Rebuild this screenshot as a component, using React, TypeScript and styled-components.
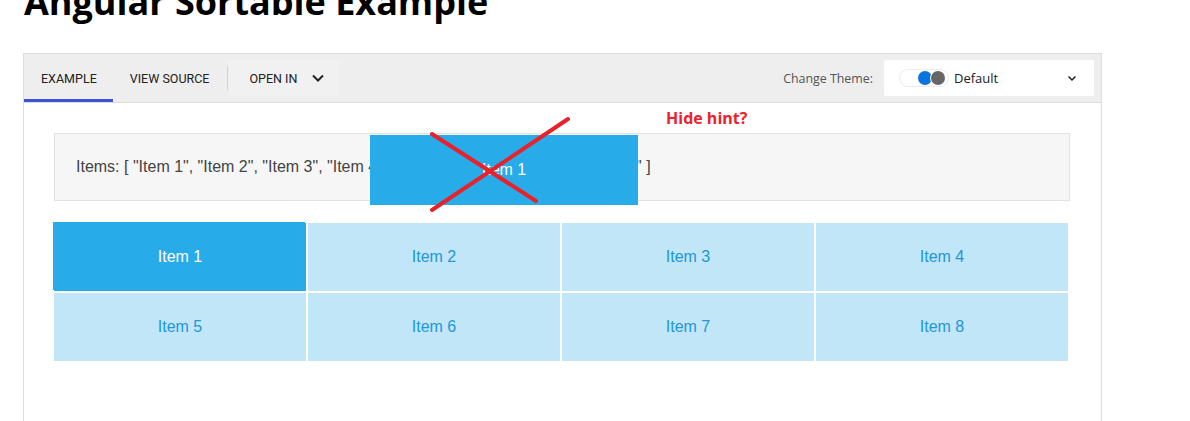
import React from 'react';
import styled, { createGlobalStyle } from 'styled-components';

const items = ['Item 1', 'Item 2', 'Item 3', 'Item 4', 'Item 5', 'Item 6', 'Item 7', 'Item 8'];

function App() {
  const [activeTab] = React.useState('example');

  return (
    <>
      <GlobalStyle />
      <Page>
        <Title>Angular Sortable Example</Title>

        <Frame>
          <Toolbar>
            <Tabs>
              <Tab $active={activeTab === 'example'}>EXAMPLE</Tab>
              <Tab $active={activeTab === 'source'}>VIEW SOURCE</Tab>
              <Separator />
              <OpenIn type="button">
                OPEN IN
                <svg width="12" height="8" viewBox="0 0 12 8">
                  <path d="M1 1.5 L6 6.5 L11 1.5" fill="none" stroke="#222" strokeWidth="2" />
                </svg>
              </OpenIn>
            </Tabs>

            <ThemePicker>
              <ThemeLabel>Change Theme:</ThemeLabel>
              <ThemeSelect>
                <ThemeSwatch>
                  <Dot $color="#0b74de" $left={18} />
                  <Dot $color="#666666" $left={31} />
                </ThemeSwatch>
                <ThemeName>Default</ThemeName>
                <svg width="10" height="7" viewBox="0 0 10 7">
                  <path d="M1.5 1.5 L5 5 L8.5 1.5" fill="none" stroke="#222" strokeWidth="1.5" />
                </svg>
              </ThemeSelect>
            </ThemePicker>
          </Toolbar>

          <Content>
            <ItemsBox>Items: [ {items.map((i) => `"${i}"`).join(', ')} ]</ItemsBox>

            <SortGrid>
              {items.map((item, index) => (
                <Cell key={item} $active={index === 0}>
                  {item}
                </Cell>
              ))}
            </SortGrid>

            <DragGhost>Item 1</DragGhost>
            <CrossMark width="160" height="110" viewBox="0 0 160 110">
              <path d="M8 21 L112 88 M144 6 L8 97" stroke="#e8212b" strokeWidth="4" strokeLinecap="round" />
            </CrossMark>
            <Hint>Hide hint?</Hint>
          </Content>
        </Frame>
      </Page>
    </>
  );
}

const GlobalStyle = createGlobalStyle`
  body {
    margin: 0;
    background: #ffffff;
    font-family: 'Liberation Sans', Arial, sans-serif;
    overflow: hidden;
  }
`;

const Page = styled.div`
  padding-left: 23px;
  width: 1079px;
`;

const Title = styled.h1`
  margin: -16px 0 33px 1px;
  font-family: 'Open Sans', sans-serif;
  font-size: 36px;
  font-weight: 700;
  line-height: 36px;
  color: #000;
  white-space: nowrap;
`;

const Frame = styled.div`
  border: 1px solid #dddddd;
  background: #ffffff;
`;

const Toolbar = styled.div`
  display: flex;
  align-items: center;
  justify-content: space-between;
  height: 48px;
  background: #eeeeee;
  border-bottom: 1px solid #dddddd;
`;

const Tabs = styled.div`
  display: flex;
  align-items: center;
  height: 100%;
`;

const Tab = styled.div<{ $active?: boolean }>`
  display: flex;
  align-items: center;
  height: 100%;
  box-sizing: border-box;
  padding: 3px 16px 0 17px;
  border-bottom: 3px solid ${(p) => (p.$active ? '#3f51d4' : 'transparent')};
  font-family: Roboto, sans-serif;
  font-size: 12.5px;
  color: #222;
`;

const Separator = styled.div`
  width: 1px;
  height: 24px;
  margin: 0 1px 0 2px;
  background: #d4d4d4;
`;

const OpenIn = styled.button`
  display: flex;
  align-items: center;
  gap: 15px;
  height: 36px;
  padding: 0 15px 0 20px;
  border: none;
  background: #f1f1f1;
  font-family: Roboto, sans-serif;
  font-size: 12.5px;
  color: #222;
`;

const ThemePicker = styled.div`
  display: flex;
  align-items: center;
  gap: 11px;
  margin-right: 7px;
`;

const ThemeLabel = styled.span`
  font-family: 'Open Sans', sans-serif;
  font-size: 12.4px;
  color: #555;
`;

const ThemeSelect = styled.div`
  display: flex;
  align-items: center;
  width: 210px;
  height: 36px;
  box-sizing: border-box;
  padding: 0 17px 0 15px;
  background: #ffffff;
  border-radius: 2px;
`;

const ThemeSwatch = styled.div`
  position: relative;
  width: 50px;
  height: 18px;
  box-sizing: border-box;
  border: 1px solid #ececec;
  border-radius: 9px;
  background: #ffffff;
`;

const Dot = styled.span<{ $color: string; $left: number }>`
  position: absolute;
  top: 1px;
  left: ${(p) => p.$left}px;
  width: 14px;
  height: 14px;
  border-radius: 50%;
  background: ${(p) => p.$color};
  box-shadow: -1px 0 0 #ffffff;
`;

const ThemeName = styled.span`
  flex: 1;
  margin-left: 5px;
  font-family: 'Open Sans', sans-serif;
  font-size: 13px;
  color: #222;
`;

const Content = styled.div`
  position: relative;
  padding: 30px 31px 80px 30px;
`;

const ItemsBox = styled.div`
  display: flex;
  align-items: center;
  height: 68px;
  box-sizing: border-box;
  padding-left: 21px;
  background: #f6f6f6;
  border: 1px solid #e2e2e2;
  font-size: 16px;
  color: #444;
  white-space: nowrap;
  overflow: hidden;
`;

const SortGrid = styled.div`
  display: grid;
  grid-template-columns: repeat(4, 1fr);
  gap: 2px;
  margin-top: 22px;
  width: 1014px;
`;

const Cell = styled.div<{ $active?: boolean }>`
  display: flex;
  align-items: center;
  justify-content: center;
  height: 68px;
  background: ${(p) => (p.$active ? '#27abe9' : '#c1e6f8')};
  box-shadow: ${(p) => (p.$active ? '-1px -1px 0 0 #27abe9' : 'none')};
  color: ${(p) => (p.$active ? '#ffffff' : '#2196d8')};
  font-size: 16px;
`;

const DragGhost = styled.div`
  position: absolute;
  left: 346px;
  top: 32px;
  width: 268px;
  height: 70px;
  display: flex;
  align-items: center;
  justify-content: center;
  background: #27abe9;
  color: #ffffff;
  font-size: 16px;
`;

const CrossMark = styled.svg`
  position: absolute;
  left: 400px;
  top: 10px;
`;

const Hint = styled.span`
  position: absolute;
  left: 642px;
  top: 4px;
  font-family: 'Open Sans', sans-serif;
  font-size: 16px;
  font-weight: 700;
  color: #ee2128;
`;

export default App;
